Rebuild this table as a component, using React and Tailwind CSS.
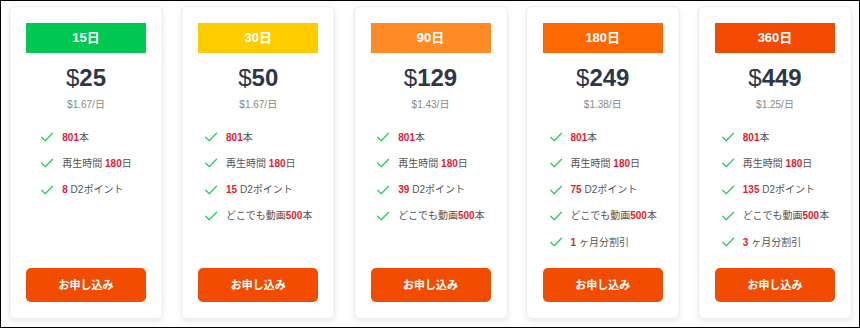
import React from "react";

const plans = [
  { days: "15日", color: "bg-[#00c853]", price: "25", per: "$1.67/日", feats: [
    [["801", true], ["本", false]],
    [["再生時間 ", false], ["180", true], ["日", false]],
    [["8", true], [" D2ポイント", false]],
  ]},
  { days: "30日", color: "bg-[#ffcc00]", price: "50", per: "$1.67/日", feats: [
    [["801", true], ["本", false]],
    [["再生時間 ", false], ["180", true], ["日", false]],
    [["15", true], [" D2ポイント", false]],
    [["どこでも動画", false], ["500", true], ["本", false]],
  ]},
  { days: "90日", color: "bg-[#ff8a26]", price: "129", per: "$1.43/日", feats: [
    [["801", true], ["本", false]],
    [["再生時間 ", false], ["180", true], ["日", false]],
    [["39", true], [" D2ポイント", false]],
    [["どこでも動画", false], ["500", true], ["本", false]],
  ]},
  { days: "180日", color: "bg-[#ff6800]", price: "249", per: "$1.38/日", feats: [
    [["801", true], ["本", false]],
    [["再生時間 ", false], ["180", true], ["日", false]],
    [["75", true], [" D2ポイント", false]],
    [["どこでも動画", false], ["500", true], ["本", false]],
    [["1", true], [" ヶ月分割引", false]],
  ]},
  { days: "360日", color: "bg-[#f24a00]", price: "449", per: "$1.25/日", feats: [
    [["801", true], ["本", false]],
    [["再生時間 ", false], ["180", true], ["日", false]],
    [["135", true], [" D2ポイント", false]],
    [["どこでも動画", false], ["500", true], ["本", false]],
    [["3", true], [" ヶ月分割引", false]],
  ]},
];

function CheckIcon() {
  return (
    <svg width="14" height="14" viewBox="0 0 24 24" fill="none" stroke="#2ec866" strokeWidth="2.2" strokeLinecap="round" strokeLinejoin="round" className="shrink-0">
      <path d="M3 12.5l6 6L21.5 5.5" />
    </svg>
  );
}

export default function App() {
  return (
    <div
      className="w-[860px] h-[328px] border border-black bg-white box-border"
      style={{ fontFamily: '"Liberation Sans", Arial, "Noto Sans CJK JP", sans-serif' }}
    >
      <div className="grid grid-cols-5 gap-[18.25px] pl-[8px] pr-[7px] pt-[5px]">
        {plans.map((p) => (
          <div
            key={p.days}
            className="h-[313px] flex flex-col rounded-[6px] border border-[#ececec] bg-white shadow-[0_3px_6px_rgba(0,0,0,0.08)] px-[16px] pt-[16px] pb-[16px]"
          >
            <div className={`${p.color} h-[30px] flex items-center justify-center text-white font-bold text-[13px]`}>
              {p.days}
            </div>
            <div className="mt-[9px] h-[32px] flex items-center justify-center text-[#2d3748] text-[24px] leading-[32px]">
              <span className="font-normal">$</span>
              <span className="font-bold">{p.price}</span>
            </div>
            <div className="mt-[4px] text-center text-[10px] leading-[14px] text-[#888]">{p.per}</div>
            <div className="mt-[12px] mx-auto w-fit flex flex-col">
              {p.feats.map((f, i) => (
                <div key={i} className="h-[26.25px] flex items-center gap-[8px] text-[10px] text-[#555] whitespace-pre">
                  <CheckIcon />
                  <span>
                    {f.map(([t, red], j) =>
                      red ? (
                        <span key={j} className="text-[#e8192c] font-bold">{t}</span>
                      ) : (
                        <span key={j}>{t}</span>
                      )
                    )}
                  </span>
                </div>
              ))}
            </div>
            <div className="mt-auto h-[34px] rounded-[5px] bg-[#f24c00] flex items-center justify-center text-white font-bold text-[11px]">
              お申し込み
            </div>
          </div>
        ))}
      </div>
    </div>
  );
}
